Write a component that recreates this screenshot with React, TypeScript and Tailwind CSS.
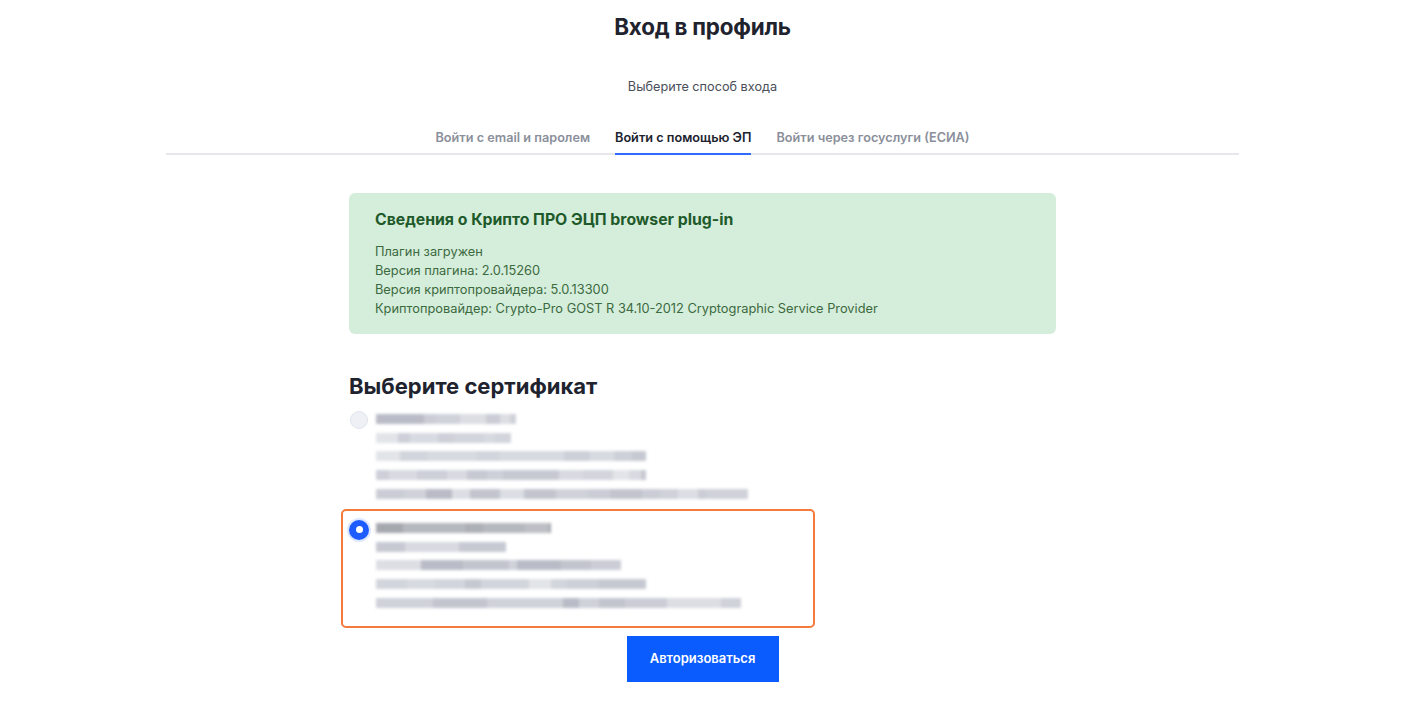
import React, { useState } from "react";

// Blurred (hidden) certificate details, drawn as pixelated grey strips
const certs: { lines: [number, number][] }[] = [
  { lines: [[140, 0], [135, 1], [270, 1], [270, 1], [372, 0]] },
  { lines: [[175, 2], [130, 1], [245, 0], [270, 1], [365, 0]] },
];

const shades = [
  ["#c3c5ce", "#d0d2da", "#b9bcc6", "#cbcdd6", "#dcdee4"],
  ["#cdd0d8", "#d8dae1", "#c6c9d2", "#d3d5dc", "#e2e4e9"],
  ["#aeb0b7", "#b6b8bf", "#a6a8b0", "#bdbfc5", "#c4c6cc"],
];

function seg(width: number, seed: number) {
  const out: { w: number; c: number }[] = [];
  let x = 0;
  let s = seed * 97 + width;
  while (x < width) {
    s = (s * 1103515245 + 12345) % 2147483648;
    const w = Math.min(width - x, 8 + (s % 26));
    out.push({ w, c: (s >> 5) % 5 });
    x += w;
  }
  return out;
}

function BlurLine({ width, tone, seed }: { width: number; tone: number; seed: number }) {
  return (
    <div className="h-[18.6px] flex items-center">
      <div className="h-[10px] flex blur-[1.6px]">
        {seg(width, seed).map((p, i) => (
          <div key={i} className="h-full" style={{ width: p.w, backgroundColor: shades[tone][p.c] }} />
        ))}
      </div>
    </div>
  );
}

export default function App() {
  const [selected, setSelected] = useState(1);
  const tabs = ["Войти с email и паролем", "Войти с помощью ЭП", "Войти через госуслуги (ЕСИА)"];

  return (
    <div className="min-h-screen bg-white text-[#20232e] font-['Inter','Liberation_Sans',sans-serif]">
      <div className="w-[1405px] flex flex-col items-center">
        {/* Header */}
        <h1 className="mt-[12px] text-[22.4px] leading-[30px] font-bold tracking-[-0.2px]">Вход в профиль</h1>
        <p className="mt-[36px] text-[12.7px] leading-[18px] text-[#4a4e5a]">Выберите способ входа</p>

        {/* Tabs */}
        <div className="mt-[33px] w-[1073px] border-b-2 border-[#e6e7eb] flex justify-center gap-[25px]">
          {tabs.map((t, i) => (
            <div
              key={i}
              className={
                i === 1
                  ? "-mb-[2px] pb-[6px] border-b-2 border-[#2f6bff] text-[12.7px] leading-[18px] font-semibold text-[#20232e]"
                  : "-mb-[2px] pb-[6px] border-b-2 border-transparent text-[12.7px] leading-[18px] font-semibold text-[#8b8f9b]"
              }
            >
              {t}
            </div>
          ))}
        </div>

        <div className="w-[707px] mt-[38px]">
          {/* Plugin info */}
          <div className="bg-[#d5eddb] rounded-[6px] pl-[26px] pr-6 pt-[16px] pb-[16px]">
            <h2 className="text-[15.8px] leading-[21px] font-bold text-[#1e5a2a]">Сведения о Крипто ПРО ЭЦП browser plug-in</h2>
            <div className="mt-[12px] text-[12.8px] leading-[19px] text-[#3b6a3e]">
              <div>Плагин загружен</div>
              <div>Версия плагина: 2.0.15260</div>
              <div>Версия криптопровайдера: 5.0.13300</div>
              <div>Криптопровайдер: Crypto-Pro GOST R 34.10-2012 Cryptographic Service Provider</div>
            </div>
          </div>

          {/* Certificates */}
          <h2 className="mt-[38px] text-[22px] leading-[28px] font-bold">Выберите сертификат</h2>
          <div className="-ml-[8px] w-[474px] flex flex-col">
            {certs.map((c, i) => (
              <div
                key={i}
                onClick={() => setSelected(i)}
                className={
                  selected === i
                    ? "flex gap-[7px] border-2 border-[#f47b3b] rounded-[5px] pl-[6px] pt-[8px] pb-[4px] last:pb-[14px] cursor-pointer"
                    : "flex gap-[7px] border-2 border-transparent rounded-[5px] pl-[6px] pt-[8px] pb-[4px] last:pb-[14px] cursor-pointer"
                }
              >
                {selected === i ? (
                  <div className="mt-[1px] w-[20px] h-[20px] rounded-full bg-[#1d5cff] shadow-[0_0_0_2px_rgba(29,92,255,0.15)] flex items-center justify-center shrink-0">
                    <div className="w-[7px] h-[7px] rounded-full bg-white" />
                  </div>
                ) : (
                  <div className="mt-[1px] ml-[1px] mr-[1px] w-[18px] h-[18px] rounded-full bg-[#eef0f6] border border-[#e2e5ee] shrink-0" />
                )}
                <div className="flex flex-col">
                  {c.lines.map(([w, tone], j) => (
                    <BlurLine key={j} width={w} tone={tone} seed={i * 10 + j + 3} />
                  ))}
                </div>
              </div>
            ))}
          </div>

          <div className="flex justify-center mt-[8px]">
            <button className="w-[152px] h-[46px] bg-[#0a5cff] text-white text-[13px] font-semibold">Авторизоваться</button>
          </div>
        </div>
      </div>
    </div>
  );
}
